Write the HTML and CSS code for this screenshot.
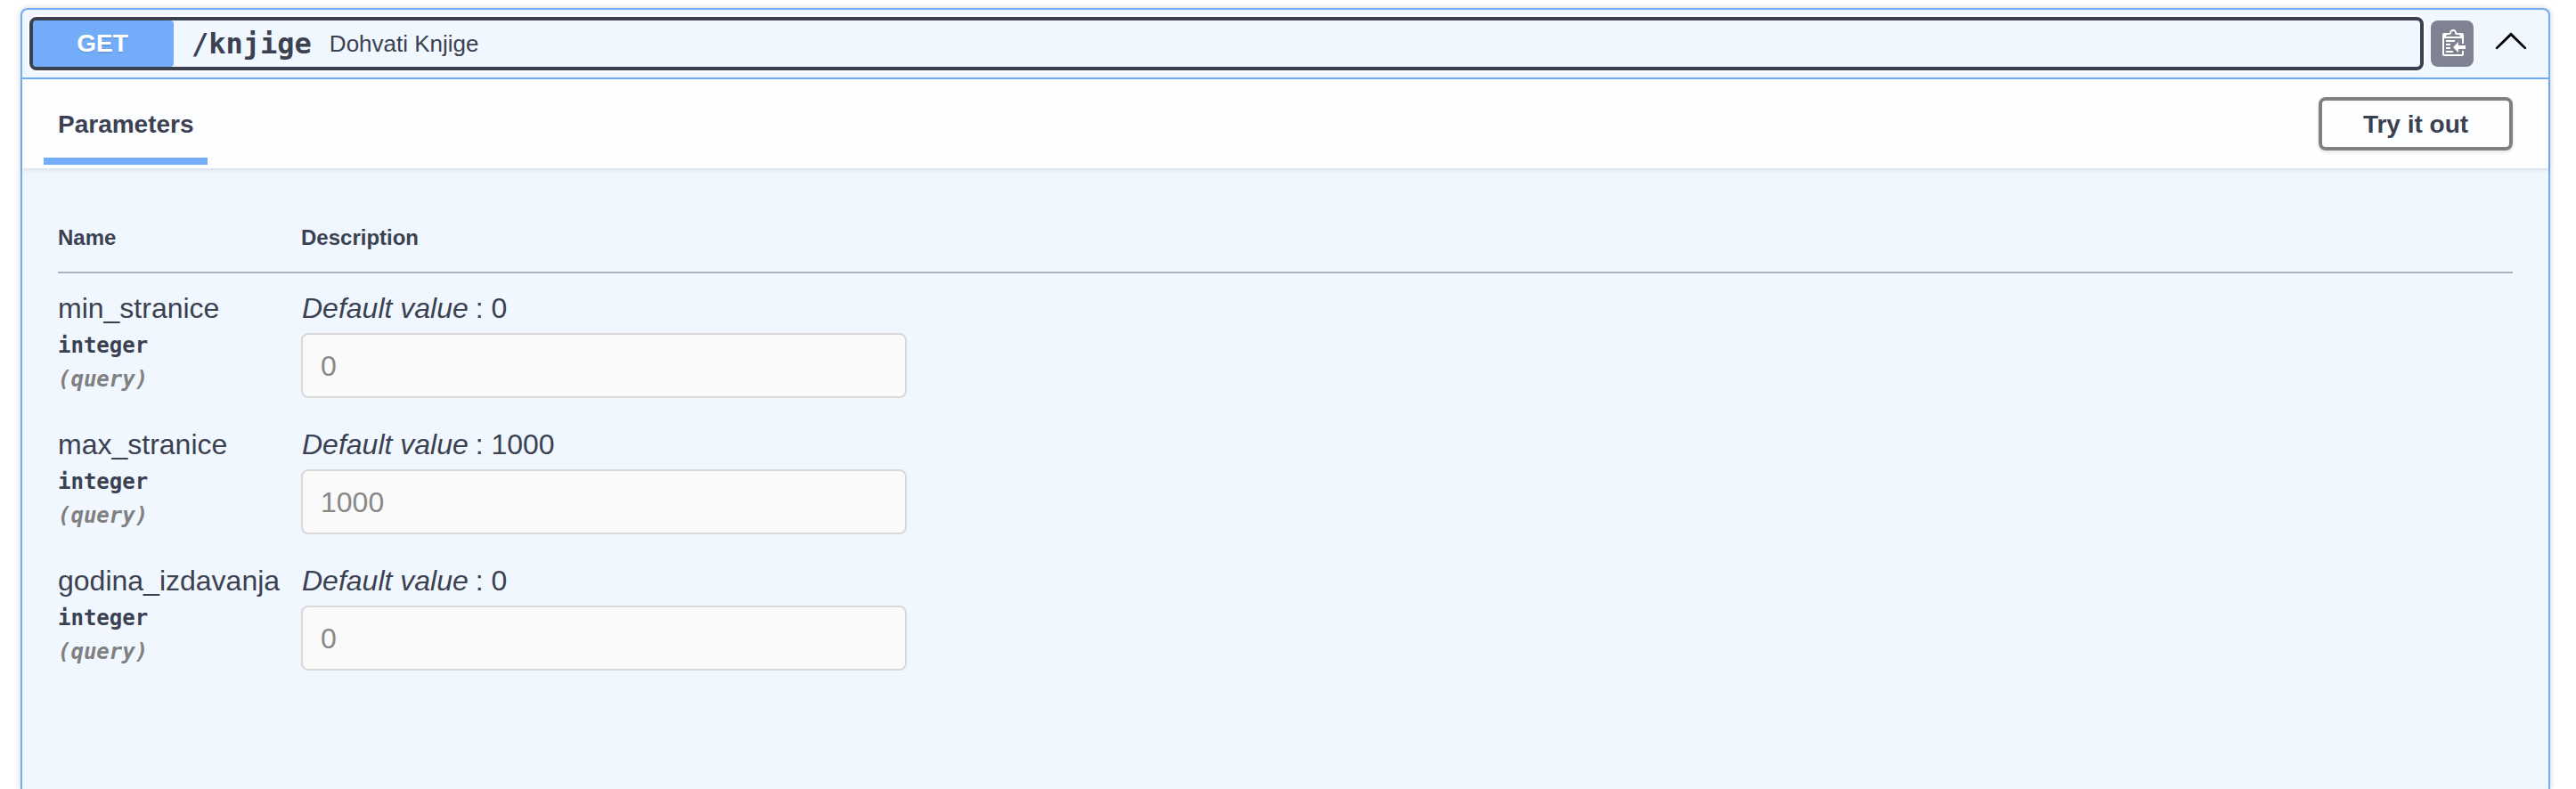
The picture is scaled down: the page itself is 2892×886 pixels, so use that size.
FILE: index.html
```html
<!DOCTYPE html>
<html lang="en">
<head>
<meta charset="utf-8">
<title>GET /knjige</title>
<link rel="stylesheet" href="styles.css">
</head>
<body>
<section class="opblock">
  <div class="summary">
    <button class="summary-control" type="button">
      <span class="method">GET</span>
      <span class="path">/knjige</span>
      <span class="summary-text">Dohvati Knjige</span>
    </button>
    <button class="copy" type="button" aria-label="Copy">
      <svg width="30" height="32" viewBox="0 0 15 16"><g transform="translate(2,-1)"><path fill="#fff" fill-rule="evenodd" d="M2 13h4v1H2v-1zm5-6H2v1h5V7zm2 3V8l-3 3 3 3v-2h5v-2H9zM4.5 9H2v1h2.5V9zM2 12h2.5v-1H2v1zm9 1h1v2c-.02.28-.11.52-.3.7-.19.18-.42.28-.7.3H1c-.55 0-1-.45-1-1V4c0-.55.45-1 1-1h3c0-1.11.89-2 2-2 1.11 0 2 .89 2 2h3c.55 0 1 .45 1 1v5h-1V6H1v9h10v-2zM2 5h8c0-.55-.45-1-1-1H8c-.55 0-1-.45-1-1s-.45-1-1-1-1 .45-1 1-.45 1-1 1H3c-.55 0-1 .45-1 1z"/></g></svg>
    </button>
    <button class="collapse" type="button" aria-label="Collapse">
      <svg width="40" height="40" viewBox="0 0 20 20"><path d="M17.418 14.908C17.69 15.176 18.127 15.176 18.397 14.908C18.667 14.64 18.668 14.207 18.397 13.939L10.489 6.109C10.219 5.841 9.782 5.841 9.51 6.109L1.602 13.939C1.332 14.207 1.332 14.64 1.602 14.908C1.872 15.176 2.309 15.176 2.58 14.908L10 7.767Z"/></svg>
    </button>
  </div>
  <div class="section-header">
    <h4 class="tab">Parameters</h4>
    <button class="try" type="button">Try it out</button>
  </div>
  <div class="parameters">
    <div class="row head">
      <div>Name</div>
      <div>Description</div>
    </div>
    <div class="row param">
      <div>
        <div class="name">min_stranice</div>
        <div class="type">integer</div>
        <div class="in">(query)</div>
      </div>
      <div>
        <p class="default"><i>Default value</i> : 0</p>
        <input class="value" type="text" placeholder="0" disabled>
      </div>
    </div>
    <div class="row param">
      <div>
        <div class="name">max_stranice</div>
        <div class="type">integer</div>
        <div class="in">(query)</div>
      </div>
      <div>
        <p class="default"><i>Default value</i> : 1000</p>
        <input class="value" type="text" placeholder="1000" disabled>
      </div>
    </div>
    <div class="row param">
      <div>
        <div class="name">godina_izdavanja</div>
        <div class="type">integer</div>
        <div class="in">(query)</div>
      </div>
      <div>
        <p class="default"><i>Default value</i> : 0</p>
        <input class="value" type="text" placeholder="0" disabled>
      </div>
    </div>
  </div>
</section>
</body>
</html>
```

FILE: styles.css
```css
* {
  box-sizing: border-box;
}

body {
  margin: 0;
  padding: 9px 29px 0 23px;
  height: 886px;
  background: #fff;
  color: #3b4151;
  font-family: "Liberation Sans", Arial, sans-serif;
}

button {
  margin: 0;
  padding: 0;
  border: 0;
  background: none;
  color: inherit;
  font-family: inherit;
}

svg {
  display: block;
}

.opblock {
  height: 877px;
  border: 2px solid #73adf9;
  border-bottom: 0;
  border-radius: 8px 8px 0 0;
  background: #f0f7ff;
  box-shadow: 0 0 6px rgba(0, 0, 0, .19);
}

.summary {
  display: flex;
  align-items: center;
  height: 78px;
  padding: 0 22px 0 12px;
  border-bottom: 2px solid #73adf9;
}

.summary-control {
  display: flex;
  flex: 1;
  align-items: center;
  height: 52px;
  border-radius: 4px;
  outline: 4px solid #3b4151;
  box-shadow: 0 0 0 6px #fff;
  background: #f0f7ff;
}

.method {
  width: 158px;
  height: 52px;
  padding-right: 2px;
  border-radius: 4px;
  background: #73adf9;
  color: #fff;
  font-size: 28px;
  font-weight: 700;
  line-height: 52px;
  text-align: center;
  text-shadow: 0 2px 0 rgba(0, 0, 0, .1);
}

.path {
  padding: 0 20px;
  font: 700 32px/38px "DejaVu Sans Mono", monospace;
}

.summary-text {
  font-size: 26px;
  line-height: 30px;
}

.copy {
  display: flex;
  justify-content: center;
  width: 48px;
  height: 52px;
  margin-left: 12px;
  padding-top: 10px;
  border-radius: 8px;
  background: #808292;
}

.collapse {
  margin: -8px 0 0 22px;
}

.section-header {
  display: flex;
  align-items: center;
  justify-content: space-between;
  height: 100px;
  padding: 0 40px 0 24px;
  background: rgba(255, 255, 255, .8);
  box-shadow: 0 2px 4px rgba(0, 0, 0, .1);
}

.tab {
  align-self: flex-end;
  width: 184px;
  height: 72px;
  margin: 0 0 4px;
  padding-left: 16px;
  border-bottom: 8px solid #73adf9;
  font-size: 28px;
  line-height: 53px;
}

.try {
  width: 218px;
  height: 60px;
  padding-top: 1px;
  border: 4px solid #808080;
  border-radius: 8px;
  box-shadow: 0 2px 4px rgba(0, 0, 0, .1);
  font-size: 28px;
  font-weight: 700;
}

.parameters {
  padding: 40px 40px 0;
}

.row {
  display: grid;
  grid-template-columns: 273px 1fr;
}

.head {
  height: 78px;
  padding-top: 24px;
  border-bottom: 2px solid #aeb2bf;
  font-size: 24px;
  font-weight: 700;
  line-height: 28px;
}

.param {
  height: 153px;
  padding-top: 20px;
}

.name,
.default {
  margin: 0;
  font-size: 32px;
  line-height: 38px;
}

.default {
  padding-left: 1px;
}

.default i {
  margin-right: -1px;
}

.name {
  margin-bottom: 4px;
}

.type,
.in {
  font: 700 24px/38px "DejaVu Sans Mono", monospace;
}

.in {
  color: #808080;
  font-style: italic;
}

.value {
  display: block;
  width: 680px;
  height: 73px;
  margin-top: 9px;
  padding: 2px 20px 0;
  border: 2px solid #d9d9d9;
  border-radius: 8px;
  background: #fafafa;
  font: 32px "Liberation Sans", Arial, sans-serif;
}

.value::placeholder {
  color: #888;
  opacity: 1;
}
```
